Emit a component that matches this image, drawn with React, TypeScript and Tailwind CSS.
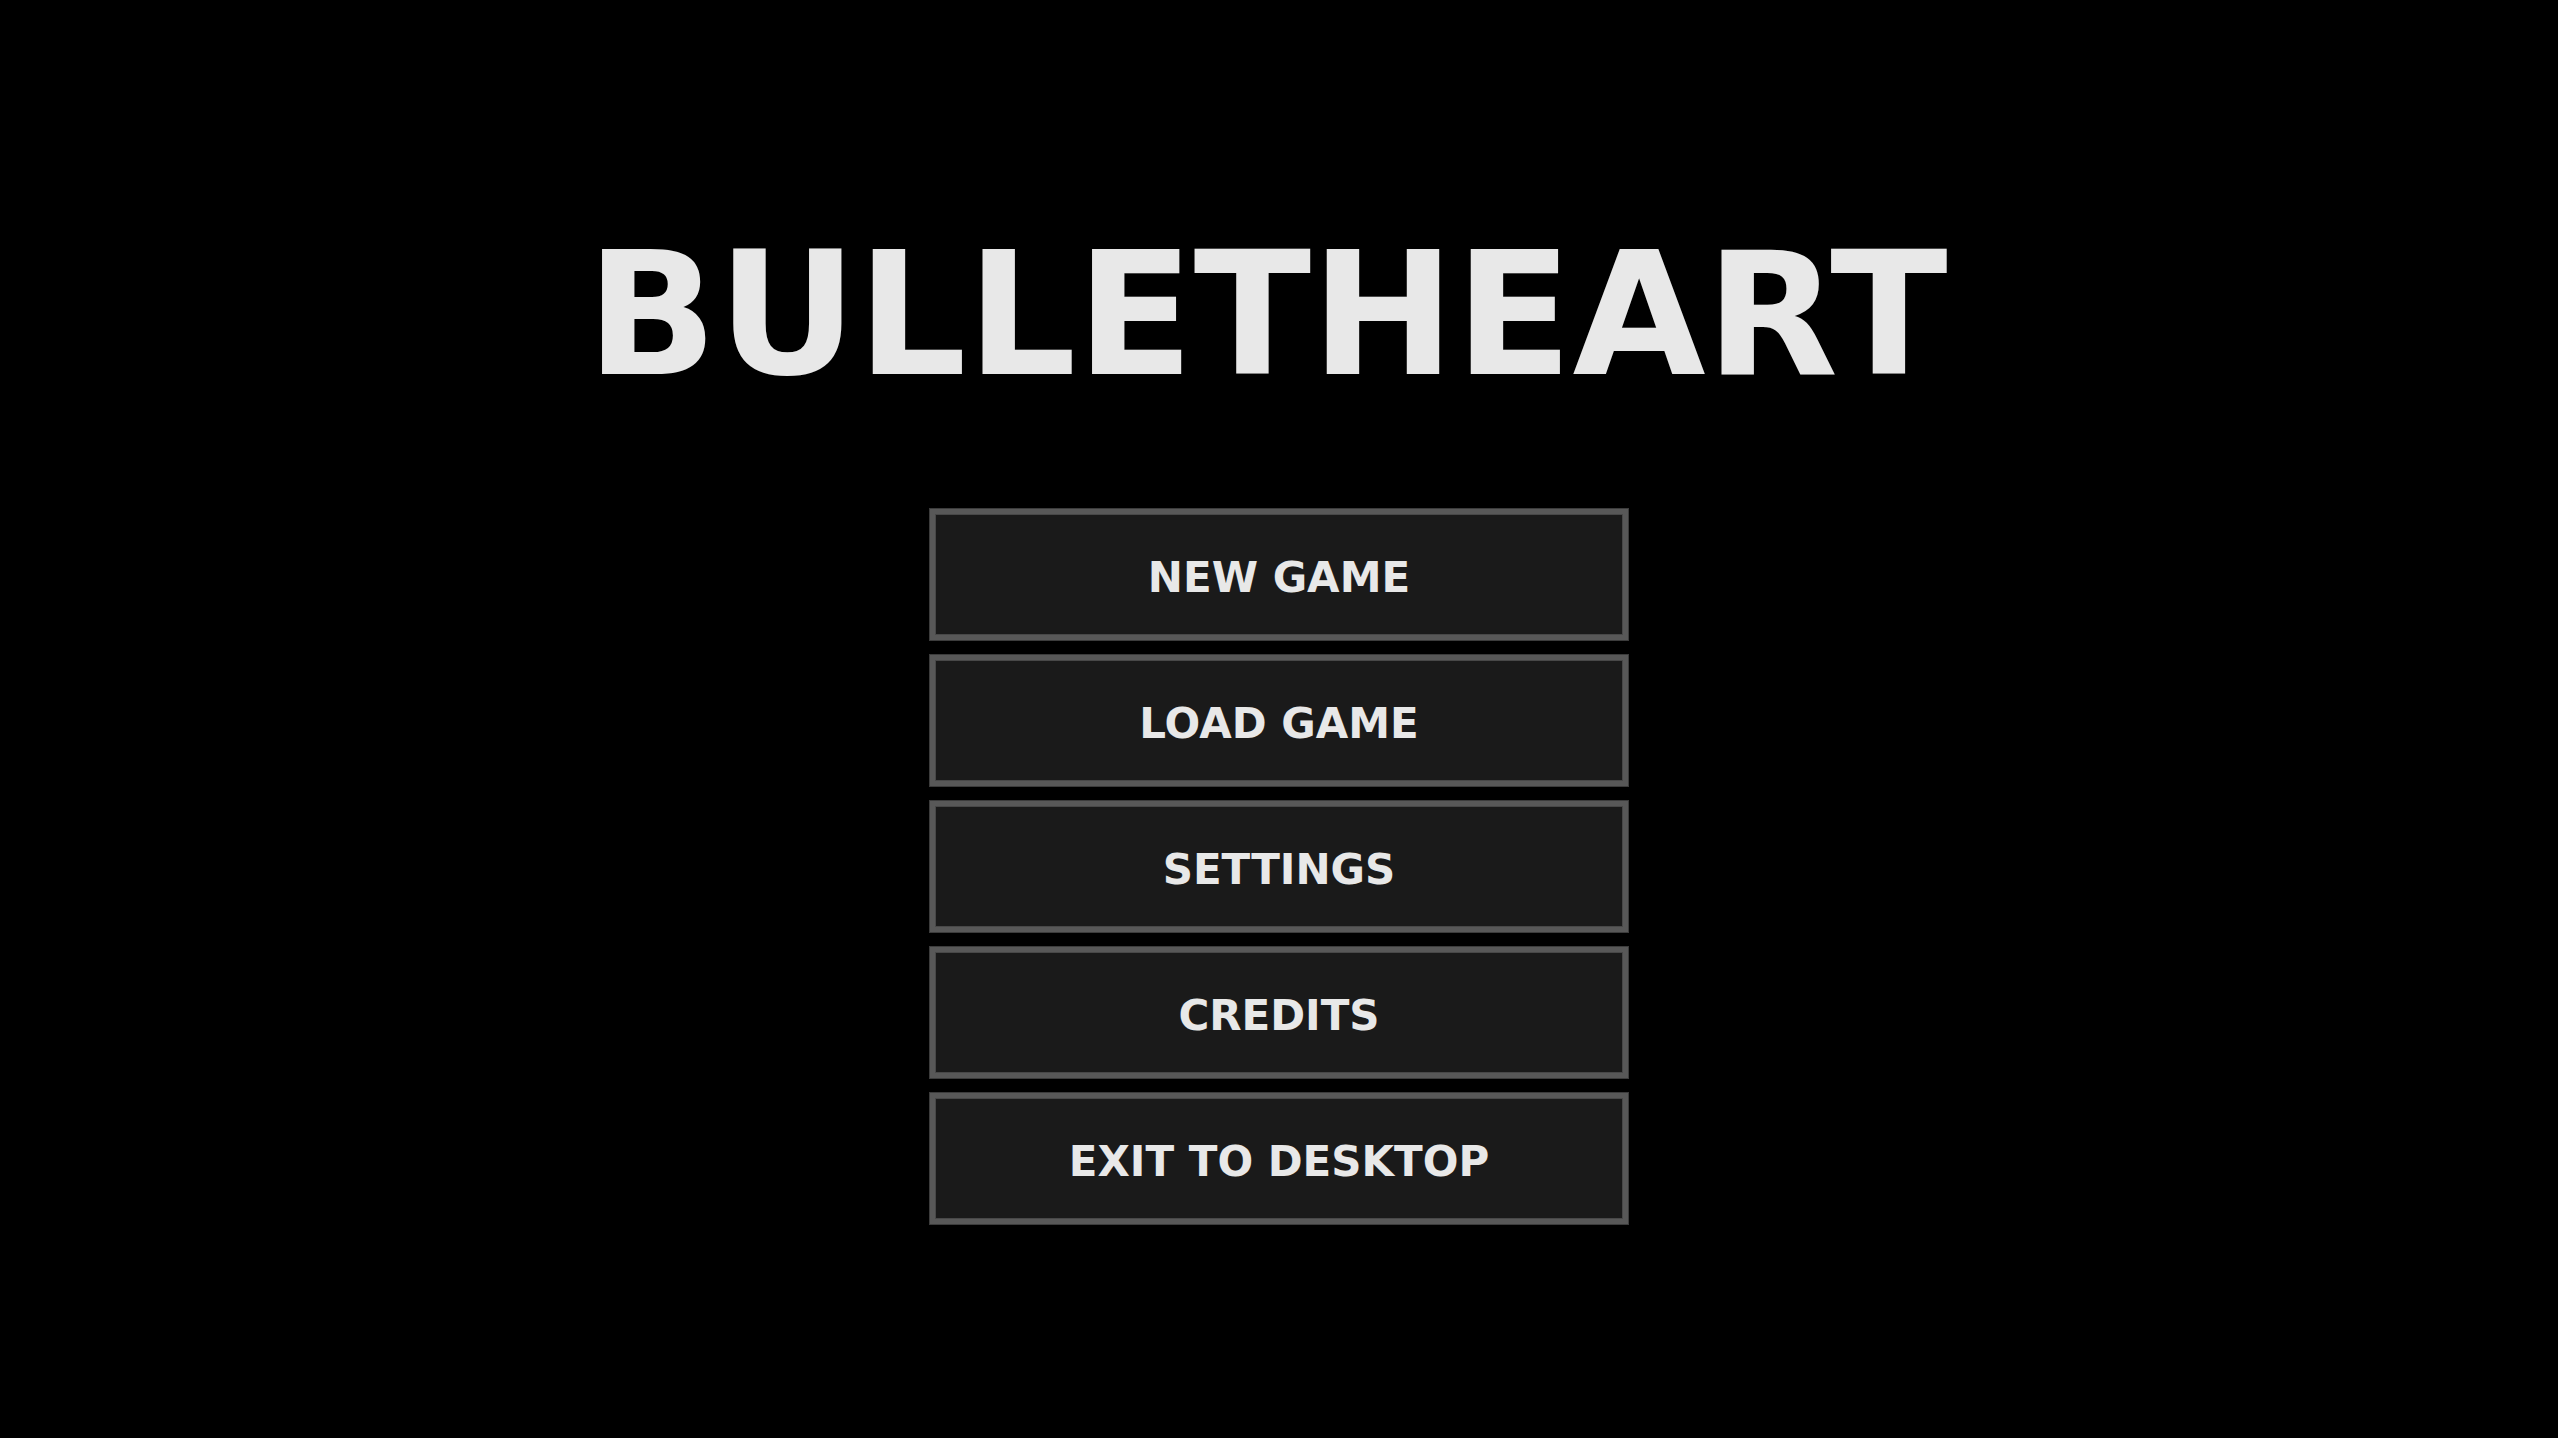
import { useState } from "react"

export interface MenuItem {
  id: string;
  label: string;
}

const menuItems: MenuItem[] = [
  { id: "new", label: "NEW GAME" },
  { id: "load", label: "LOAD GAME" },
  { id: "settings", label: "SETTINGS" },
  { id: "credits", label: "CREDITS" },
  { id: "exit", label: "EXIT TO DESKTOP" },
];

interface MenuButtonProps {
  item: MenuItem;
  onSelect: (id: string) => void;
}

function MenuButton({ item, onSelect }: MenuButtonProps) {
  return (
    <button
      type="button"
      className="h-[131px] w-full cursor-pointer border-[5px] border-[#585858] bg-[#1a1a1a] pt-1.5 text-center text-[42px] leading-none font-bold text-[#e8e8e8] shadow-[0_0_0_1px_#3c3c3c,inset_0_0_0_1px_#484848] hover:bg-[#262626]"
      onClick={() => onSelect(item.id)}
    >
      {item.label}
    </button>
  )
}

function App() {
  const [, setSelected] = useState<string | null>(null);

  return (
    <main className="flex min-h-screen flex-col items-center bg-black px-6 pt-[229px] pb-24 font-['DejaVu_Sans',sans-serif]">
      <h1 className="pr-6 text-center text-[172px] leading-none font-bold text-[#e8e8e8]">
        BULLETHEART
      </h1>

      <nav className="mt-[108px] w-full max-w-[698px]" aria-label="Main menu">
        <ul className="flex flex-col gap-[15px]">
          {menuItems.map((item) => (
            <li key={item.id} className="flex">
              <MenuButton item={item} onSelect={setSelected} />
            </li>
          ))}
        </ul>
      </nav>
    </main>
  )
}

export default App;
